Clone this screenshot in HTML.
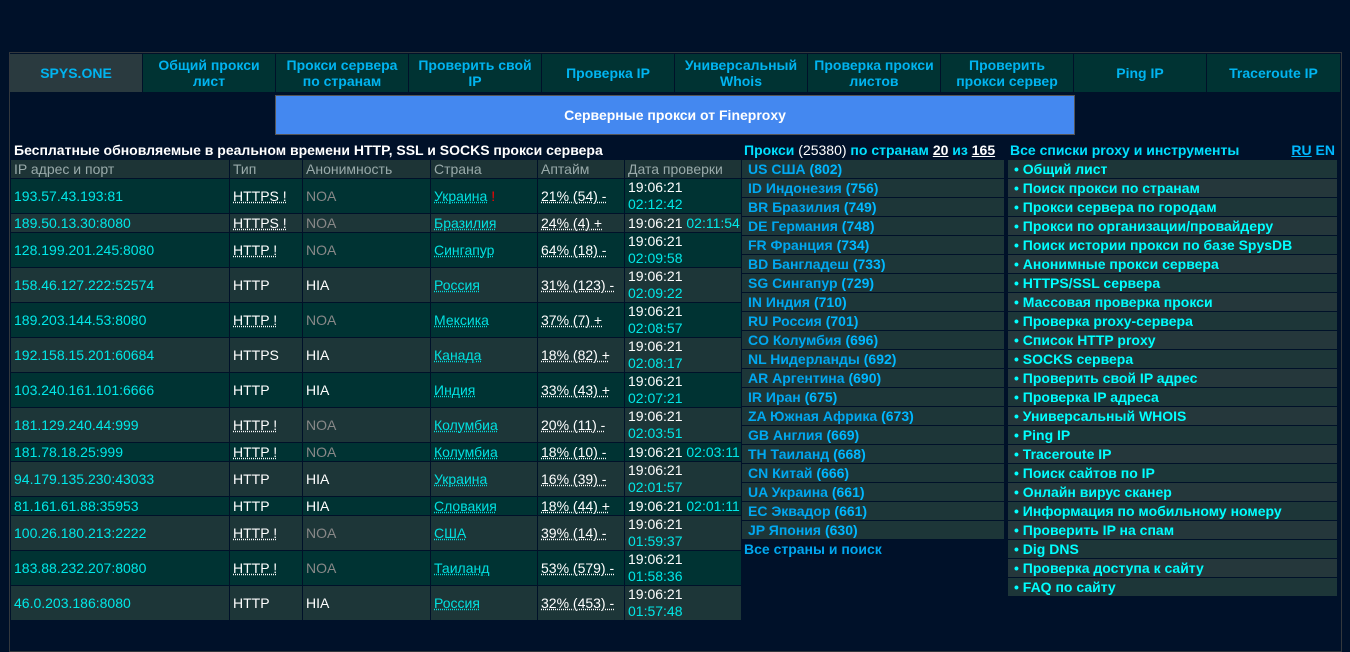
<!DOCTYPE html>
<html><head><meta charset="utf-8"><style>
body{margin:0;width:1350px;height:617px;background:#001129;font-family:"Liberation Sans",Arial,sans-serif;overflow:hidden;position:relative}
.a{position:absolute;box-sizing:border-box}
#outer{left:9px;top:52px;width:1333px;height:600px;border:1px solid #33383d}
.nav{top:54px;height:38px;background:#003333;color:#00b4f0;font-weight:bold;font-size:14px;display:flex;align-items:center;justify-content:center;text-align:center;line-height:16px}
#ban{left:275px;top:95px;width:800px;height:40px;background:#4488f0;border:1px solid #555;color:#fff;font-weight:bold;font-size:14px;display:flex;align-items:center;justify-content:center}
table{border-collapse:collapse;table-layout:fixed}
td{padding:0 0 0 3px;border:1px solid #001129;font-size:14px;line-height:18px;overflow:hidden;white-space:nowrap;vertical-align:middle}
#L{left:10px;top:140px;width:731px}
.t td{background:#001129;color:#fff;font-weight:bold}
.h td{background:#1d3436;color:#9aa;height:17px}
.d td{background:#003333}
.g td{background:#1d3638}
.ip{color:#00e8e8}
.w{color:#fff}
.n{color:#888}
.u{text-decoration:underline dotted}
.c{color:#00e0e0;text-decoration:underline dotted}
.tm{color:#fff;line-height:17px}
.tm span{color:#00e8e8}
#M{left:741px;top:140px;width:264px}
#M td,#R td{font-weight:bold;height:18px}
#M .r td{background:#1d3638;padding-left:6px;color:#00a8f0}
#M .r b{color:#00b8ff}
#R{left:1007px;top:140px;width:331px}
#R .r td{padding-left:6px;color:#00ffff;background:#1d3638}
#R .r:nth-child(odd) td{background:#25373b}
</style></head><body>
<div class="a" id="outer"></div>
<div class="a nav" style="left:10px;width:132px;background:#2a3a3f">SPYS.ONE</div>
<div class="a nav" style="left:143px;width:132px">Общий прокси<br>лист</div>
<div class="a nav" style="left:276px;width:132px">Прокси сервера<br>по странам</div>
<div class="a nav" style="left:409px;width:132px">Проверить свой<br>IP</div>
<div class="a nav" style="left:542px;width:132px">Проверка IP</div>
<div class="a nav" style="left:675px;width:132px">Универсальный<br>Whois</div>
<div class="a nav" style="left:808px;width:132px">Проверка прокси<br>листов</div>
<div class="a nav" style="left:941px;width:132px">Проверить<br>прокси сервер</div>
<div class="a nav" style="left:1074px;width:132px">Ping IP</div>
<div class="a nav" style="left:1207px;width:133px">Traceroute IP</div>
<div class="a" id="ban">Серверные прокси от Fineproxy</div>

<table class="a" id="L">
<colgroup><col style="width:219px"><col style="width:73px"><col style="width:128px"><col style="width:107px"><col style="width:87px"><col style="width:117px"></colgroup>
<tr class="t"><td colspan="6" style="height:18px">Бесплатные обновляемые в реальном времени HTTP, SSL и SOCKS прокси сервера</td></tr>
<tr class="h"><td>IP адрес и порт</td><td>Тип</td><td>Анонимность</td><td>Страна</td><td>Аптайм</td><td>Дата проверки</td></tr>
<tr class="d" style="height:35px"><td class="ip">193.57.43.193:81</td><td class="w u">HTTPS !</td><td class="n">NOA</td><td><span class="c">Украина</span> <span style="color:#f00">!</span></td><td class="w u">21% (54) -</td><td class="tm">19:06:21<br><span>02:12:42</span></td></tr>
<tr class="g" style="height:19px"><td class="ip">189.50.13.30:8080</td><td class="w u">HTTPS !</td><td class="n">NOA</td><td><span class="c">Бразилия</span></td><td class="w u">24% (4) +</td><td class="tm">19:06:21 <span>02:11:54</span></td></tr>
<tr class="d" style="height:35px"><td class="ip">128.199.201.245:8080</td><td class="w u">HTTP !</td><td class="n">NOA</td><td><span class="c">Сингапур</span></td><td class="w u">64% (18) -</td><td class="tm">19:06:21<br><span>02:09:58</span></td></tr>
<tr class="g" style="height:35px"><td class="ip">158.46.127.222:52574</td><td class="w">HTTP</td><td class="w">HIA</td><td><span class="c">Россия</span></td><td class="w u">31% (123) -</td><td class="tm">19:06:21<br><span>02:09:22</span></td></tr>
<tr class="d" style="height:35px"><td class="ip">189.203.144.53:8080</td><td class="w u">HTTP !</td><td class="n">NOA</td><td><span class="c">Мексика</span></td><td class="w u">37% (7) +</td><td class="tm">19:06:21<br><span>02:08:57</span></td></tr>
<tr class="g" style="height:35px"><td class="ip">192.158.15.201:60684</td><td class="w">HTTPS</td><td class="w">HIA</td><td><span class="c">Канада</span></td><td class="w u">18% (82) +</td><td class="tm">19:06:21<br><span>02:08:17</span></td></tr>
<tr class="d" style="height:35px"><td class="ip">103.240.161.101:6666</td><td class="w">HTTP</td><td class="w">HIA</td><td><span class="c">Индия</span></td><td class="w u">33% (43) +</td><td class="tm">19:06:21<br><span>02:07:21</span></td></tr>
<tr class="g" style="height:35px"><td class="ip">181.129.240.44:999</td><td class="w u">HTTP !</td><td class="n">NOA</td><td><span class="c">Колумбиа</span></td><td class="w u">20% (11) -</td><td class="tm">19:06:21<br><span>02:03:51</span></td></tr>
<tr class="d" style="height:19px"><td class="ip">181.78.18.25:999</td><td class="w u">HTTP !</td><td class="n">NOA</td><td><span class="c">Колумбиа</span></td><td class="w u">18% (10) -</td><td class="tm">19:06:21 <span>02:03:11</span></td></tr>
<tr class="g" style="height:35px"><td class="ip">94.179.135.230:43033</td><td class="w">HTTP</td><td class="w">HIA</td><td><span class="c">Украина</span></td><td class="w u">16% (39) -</td><td class="tm">19:06:21<br><span>02:01:57</span></td></tr>
<tr class="d" style="height:19px"><td class="ip">81.161.61.88:35953</td><td class="w">HTTP</td><td class="w">HIA</td><td><span class="c">Словакия</span></td><td class="w u">18% (44) +</td><td class="tm">19:06:21 <span>02:01:11</span></td></tr>
<tr class="g" style="height:35px"><td class="ip">100.26.180.213:2222</td><td class="w u">HTTP !</td><td class="n">NOA</td><td><span class="c">США</span></td><td class="w u">39% (14) -</td><td class="tm">19:06:21<br><span>01:59:37</span></td></tr>
<tr class="d" style="height:35px"><td class="ip">183.88.232.207:8080</td><td class="w u">HTTP !</td><td class="n">NOA</td><td><span class="c">Таиланд</span></td><td class="w u">53% (579) -</td><td class="tm">19:06:21<br><span>01:58:36</span></td></tr>
<tr class="g" style="height:35px"><td class="ip">46.0.203.186:8080</td><td class="w">HTTP</td><td class="w">HIA</td><td><span class="c">Россия</span></td><td class="w u">32% (453) -</td><td class="tm">19:06:21<br><span>01:57:48</span></td></tr>
</table>

<table class="a" id="M" style="border:1px solid #33383d">
<tr><td style="color:#00e0ff;padding-left:2px">Прокси <span style="font-weight:normal;color:#fff">(25380)</span> по странам <u style="color:#fff">20</u> из <u style="color:#fff">165</u></td></tr>
<tr class="r"><td>US США <b>(802)</b></td></tr>
<tr class="r"><td>ID Индонезия <b>(756)</b></td></tr>
<tr class="r"><td>BR Бразилия <b>(749)</b></td></tr>
<tr class="r"><td>DE Германия <b>(748)</b></td></tr>
<tr class="r"><td>FR Франция <b>(734)</b></td></tr>
<tr class="r"><td>BD Бангладеш <b>(733)</b></td></tr>
<tr class="r"><td>SG Сингапур <b>(729)</b></td></tr>
<tr class="r"><td>IN Индия <b>(710)</b></td></tr>
<tr class="r"><td>RU Россия <b>(701)</b></td></tr>
<tr class="r"><td>CO Колумбия <b>(696)</b></td></tr>
<tr class="r"><td>NL Нидерланды <b>(692)</b></td></tr>
<tr class="r"><td>AR Аргентина <b>(690)</b></td></tr>
<tr class="r"><td>IR Иран <b>(675)</b></td></tr>
<tr class="r"><td>ZA Южная Африка <b>(673)</b></td></tr>
<tr class="r"><td>GB Англия <b>(669)</b></td></tr>
<tr class="r"><td>TH Таиланд <b>(668)</b></td></tr>
<tr class="r"><td>CN Китай <b>(666)</b></td></tr>
<tr class="r"><td>UA Украина <b>(661)</b></td></tr>
<tr class="r"><td>EC Эквадор <b>(661)</b></td></tr>
<tr class="r"><td>JP Япония <b>(630)</b></td></tr>
<tr><td style="color:#00a8f0;padding-left:2px">Все страны и поиск</td></tr>
</table>

<table class="a" id="R" style="border:1px solid #33383d">
<tr><td style="color:#00e0ff;padding-left:2px">Все списки proxy и инструменты<span style="float:right;padding-right:2px"><u style="color:#00b8ff">RU</u> <span style="color:#00b8ff">EN</span></span></td></tr>
<tr class="r"><td>• Общий лист</td></tr>
<tr class="r"><td>• Поиск прокси по странам</td></tr>
<tr class="r"><td>• Прокси сервера по городам</td></tr>
<tr class="r"><td>• Прокси по организации/провайдеру</td></tr>
<tr class="r"><td>• Поиск истории прокси по базе SpysDB</td></tr>
<tr class="r"><td>• Анонимные прокси сервера</td></tr>
<tr class="r"><td>• HTTPS/SSL сервера</td></tr>
<tr class="r"><td>• Массовая проверка прокси</td></tr>
<tr class="r"><td>• Проверка proxy-сервера</td></tr>
<tr class="r"><td>• Список HTTP proxy</td></tr>
<tr class="r"><td>• SOCKS сервера</td></tr>
<tr class="r"><td>• Проверить свой IP адрес</td></tr>
<tr class="r"><td>• Проверка IP адреса</td></tr>
<tr class="r"><td>• Универсальный WHOIS</td></tr>
<tr class="r"><td>• Ping IP</td></tr>
<tr class="r"><td>• Traceroute IP</td></tr>
<tr class="r"><td>• Поиск сайтов по IP</td></tr>
<tr class="r"><td>• Онлайн вирус сканер</td></tr>
<tr class="r"><td>• Информация по мобильному номеру</td></tr>
<tr class="r"><td>• Проверить IP на спам</td></tr>
<tr class="r"><td>• Dig DNS</td></tr>
<tr class="r"><td>• Проверка доступа к сайту</td></tr>
<tr class="r"><td>• FAQ по сайту</td></tr>
</table>
</body></html>
